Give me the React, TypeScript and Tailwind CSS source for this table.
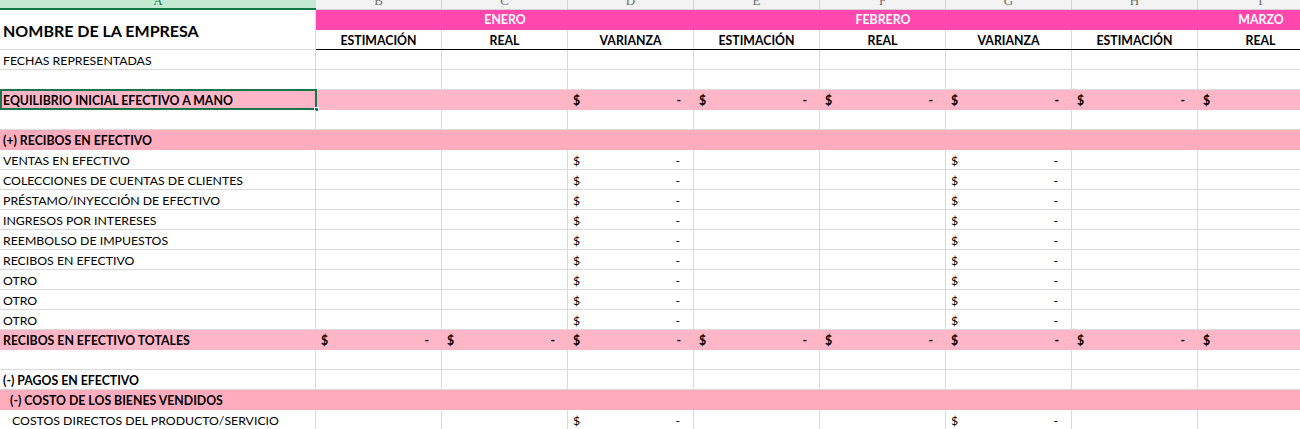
import React from "react";

const HEAD_PINK = "bg-[#ff47ad]";
const BAND = "bg-[#ffb7c7]";
const SECTION = "bg-[#ffadbe]";

type Money = "none" | "varianza" | "from-d" | "all";

interface RowDef {
  label: string;
  bold?: boolean;
  fill?: "band" | "section";
  indent?: "sm" | "md";
  money?: Money;
  selected?: boolean;
}

const rows: RowDef[] = [
  { label: "FECHAS REPRESENTADAS" },
  { label: "" },
  { label: "EQUILIBRIO INICIAL EFECTIVO A MANO", bold: true, fill: "band", money: "from-d", selected: true },
  { label: "" },
  { label: "(+) RECIBOS EN EFECTIVO", bold: true, fill: "section" },
  { label: "VENTAS EN EFECTIVO", money: "varianza" },
  { label: "COLECCIONES DE CUENTAS DE CLIENTES", money: "varianza" },
  { label: "PRÉSTAMO/INYECCIÓN DE EFECTIVO", money: "varianza" },
  { label: "INGRESOS POR INTERESES", money: "varianza" },
  { label: "REEMBOLSO DE IMPUESTOS", money: "varianza" },
  { label: "RECIBOS EN EFECTIVO", money: "varianza" },
  { label: "OTRO", money: "varianza" },
  { label: "OTRO", money: "varianza" },
  { label: "OTRO", money: "varianza" },
  { label: "RECIBOS EN EFECTIVO TOTALES", bold: true, fill: "band", money: "all" },
  { label: "" },
  { label: "(-) PAGOS EN EFECTIVO", bold: true },
  { label: "(-) COSTO DE LOS BIENES VENDIDOS", bold: true, fill: "section", indent: "sm" },
  { label: "COSTOS DIRECTOS DEL PRODUCTO/SERVICIO", indent: "md", money: "varianza" },
];

const colLetters = ["B", "C", "D", "E", "F", "G", "H", "I"];
const subHeads = ["ESTIMACIÓN", "REAL", "VARIANZA", "ESTIMACIÓN", "REAL", "VARIANZA", "ESTIMACIÓN", "REAL"];

function hasMoney(money: Money | undefined, i: number) {
  if (money === "all") return true;
  if (money === "from-d") return i >= 2;
  if (money === "varianza") return i === 2 || i === 5;
  return false;
}

function MoneyCell({ bold }: { bold?: boolean }) {
  return (
    <div className={`flex w-full justify-between pl-[5px] pr-[13px] ${bold ? "font-bold" : ""}`}>
      <span>$</span>
      <span>-</span>
    </div>
  );
}

function SheetRow({ row }: { row: RowDef }) {
  const fill = row.fill === "band" ? BAND : row.fill === "section" ? SECTION : "";
  const lineCls = fill ? `${fill} border-transparent` : "bg-white border-[#dadada]";
  const indent = row.indent === "sm" ? "pl-[10px]" : row.indent === "md" ? "pl-[12px]" : "pl-[3px]";

  return (
    <div className="flex h-[20px] leading-[22px]">
      <div
        className={`relative w-[316px] shrink-0 border-b ${fill ? "border-r-transparent" : "border-r"} ${lineCls} ${indent} whitespace-nowrap ${
          row.bold ? "font-bold" : ""
        }`}
      >
        {row.label}
        {row.selected && (
          <>
            <div className="absolute -top-px left-0 -right-px -bottom-px border-2 border-[#18764a]" />
            <div className="absolute -right-[3px] -bottom-[3px] h-[5px] w-[5px] border border-white bg-[#18764a]" />
          </>
        )}
      </div>
      {colLetters.map((c, i) => (
        <div
          key={c}
          className={`flex w-[126px] shrink-0 border-b ${fill ? "" : "border-r"} ${lineCls}`}
        >
          {hasMoney(row.money, i) && <MoneyCell bold={row.bold} />}
        </div>
      ))}
    </div>
  );
}

export default function App() {
  return (
    <div className="h-[429px] w-[1300px] overflow-hidden bg-white font-['Lato',sans-serif] text-[12.3px] text-black">
      {/* column letters */}
      <div className="flex h-[10px] overflow-hidden font-['Liberation_Serif',serif] text-[13px] leading-none text-[#6d6d6d]">
        <div className="flex w-[316px] shrink-0 justify-center border-b-2 border-[#137a45] bg-[#c4ead3] text-[#137a45]">
          <span className="-mt-[6px]">A</span>
        </div>
        {colLetters.map((c) => (
          <div
            key={c}
            className="flex w-[126px] shrink-0 justify-center border-r border-b border-[#d4d4d4] bg-[#f3f3f3]"
          >
            <span className="-mt-[6px]">{c}</span>
          </div>
        ))}
      </div>

      {/* title + months */}
      <div className="flex">
        <div className="flex h-[40px] w-[316px] shrink-0 items-center border-r border-b border-[#dadada] pl-[3px] pt-[3px] text-[16px] font-bold">
          NOMBRE DE LA EMPRESA
        </div>
        <div className="flex flex-col">
          <div className={`flex h-[20px] items-center font-bold text-white ${HEAD_PINK}`}>
            <div className="w-[378px] shrink-0 text-center">ENERO</div>
            <div className="w-[378px] shrink-0 text-center">FEBRERO</div>
            <div className="w-[378px] shrink-0 text-center">MARZO</div>
          </div>
          <div className="flex h-[20px] border-b border-black font-bold">
            {subHeads.map((h, i) => (
              <div
                key={i}
                className="w-[126px] shrink-0 border-r border-[#dadada] pt-[3px] text-center leading-[16px]"
              >
                {h}
              </div>
            ))}
          </div>
        </div>
      </div>

      {rows.map((r, i) => (
        <SheetRow key={i} row={r} />
      ))}
    </div>
  );
}
